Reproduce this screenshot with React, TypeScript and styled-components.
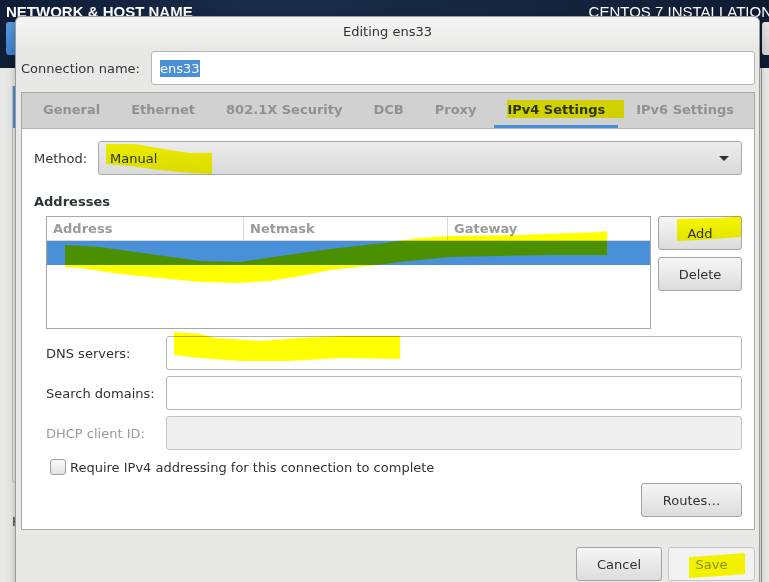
import React from 'react'
import styled, { createGlobalStyle } from 'styled-components'

const GlobalStyle = createGlobalStyle`
  html, body {
    margin: 0;
    padding: 0;
  }
  body {
    font-family: 'DejaVu Sans', 'Noto Sans', sans-serif;
    font-size: 13px;
    color: #2e3436;
    background: #e8e8e7;
  }
`

const Screen = styled.div`
  position: relative;
  width: 769px;
  height: 582px;
  overflow: hidden;
  background: #e8e8e7;
`

const TopBar = styled.div`
  height: 68px;
  background: linear-gradient(90deg, #0f1d37 0%, #1a2c4a 35%, #15253f 70%, #0f1b32 100%);
  color: #fff;
  font-family: 'Liberation Sans', Arial, sans-serif;
  font-size: 15px;
`

const TitleRow = styled.div`
  display: flex;
  height: 22px;
  padding: 4px 0 0 6px;
  box-sizing: border-box;
  line-height: 15px;
  white-space: nowrap;
`

const SpokeTitle = styled.div`
  font-weight: bold;
`

const InstallTitle = styled.div`
  margin-left: auto;
  margin-right: -3px;
`

const TopButtons = styled.div`
  display: flex;
  justify-content: space-between;
  height: 33px;
`

const DoneButton = styled.div`
  width: 60px;
  margin-left: 6px;
  background: linear-gradient(#5a9be0, #3a7fcb);
  border-radius: 3px;
`

const KeyboardButton = styled.div`
  width: 20px;
  margin-right: -13px;
  background: linear-gradient(#e4e4e4, #d2d2d2);
  border-radius: 3px;
`

const Body = styled.div`
  display: flex;
  justify-content: space-between;
  height: 514px;
`

const LeftStrip = styled.div`
  display: flex;
  flex-direction: column;
  padding-top: 18px;
  width: 40px;
`

const ListEdge = styled.div`
  margin-left: 12px;
  width: 26px;
  height: 397px;
  border-left: 1px solid #c4c4c4;
  border-bottom: 1px solid #c4c4c4;
  border-bottom-left-radius: 4px;
  box-sizing: border-box;
`

const ListSelected = styled.div`
  height: 42px;
  background: #4a90d9;
`

const HostLabel = styled.div`
  margin: 31px 0 0 12px;
  white-space: nowrap;
`

const RightStrip = styled.div`
  width: 7px;
  border-left: 1px solid #9a9a9a;
`

const Dialog = styled.div`
  position: absolute;
  left: 15px;
  top: 16px;
  width: 745px;
  height: 600px;
  box-sizing: border-box;
  border: 1px solid #9a9a9a;
  border-radius: 6px 6px 0 0;
  background: #e8e8e7;
  box-shadow: 0 2px 8px rgba(0, 0, 0, 0.25);
`

const TitleBar = styled.div`
  height: 28px;
  display: flex;
  align-items: center;
  justify-content: center;
  border-radius: 6px 6px 0 0;
  background: linear-gradient(#f4f4f4, #ebebea);
`

const DialogContent = styled.div`
  padding: 6px 4px 0 5px;
`

const ConnRow = styled.div`
  display: flex;
  align-items: center;
  height: 34px;
`

const ConnLabel = styled.div`
  width: 130px;
`

const Entry = styled.div<{ disabled?: boolean }>`
  flex: 1;
  height: 34px;
  box-sizing: border-box;
  border: 1px solid ${(p) => (p.disabled ? '#c2c2c0' : '#b6b6b3')};
  border-radius: 3px;
  background: ${(p) => (p.disabled ? '#efefef' : '#ffffff')};
  display: flex;
  align-items: center;
  padding-left: 8px;
`

const Selected = styled.span`
  background: #4a90d9;
  color: #fff;
  line-height: 17px;
`

const Notebook = styled.div`
  margin-top: 7px;
  border: 1px solid #a8a8a8;
`

const TabBar = styled.div`
  display: flex;
  gap: 5px;
  height: 35px;
  padding-left: 8px;
  background: #d1d1d1;
  border-bottom: 1px solid #b4b4b4;
`

const Tab = styled.div<{ active?: boolean }>`
  display: flex;
  align-items: center;
  padding: 0 13px 3px;
  font-weight: bold;
  color: ${(p) => (p.active ? '#2e3436' : '#919191')};
  box-shadow: ${(p) => (p.active ? 'inset 0 -3px 0 #4a90d9' : 'none')};
`

const Panel = styled.div`
  background: #fff;
  padding: 12px;
  height: 400px;
  box-sizing: border-box;
`

const MethodRow = styled.div`
  display: flex;
  align-items: center;
  height: 34px;
`

const MethodLabel = styled.div`
  width: 64px;
`

const Combo = styled.div`
  flex: 1;
  height: 34px;
  box-sizing: border-box;
  border: 1px solid #a8a8a8;
  border-radius: 3px;
  background: linear-gradient(#ececec, #dadada);
  display: flex;
  align-items: center;
  justify-content: space-between;
  padding: 0 12px 0 11px;
`

const Arrow = styled.div`
  width: 0;
  height: 0;
  border-left: 5px solid transparent;
  border-right: 5px solid transparent;
  border-top: 5px solid #2e3436;
`

const Heading = styled.div`
  font-weight: bold;
  line-height: 18px;
  margin: 18px 0 5px;
`

const AddrRow = styled.div`
  display: flex;
  gap: 7px;
  margin-left: 12px;
`

const Table = styled.div`
  width: 605px;
  height: 113px;
  box-sizing: border-box;
  border: 1px solid #a8a8a8;
`

const HeadRow = styled.div`
  display: grid;
  grid-template-columns: 196px 204px 1fr;
  height: 23px;
  border-bottom: 1px solid #d8d8d8;
`

const HeadCell = styled.div`
  display: flex;
  align-items: center;
  padding-left: 6px;
  font-weight: bold;
  color: #9a9a9a;
  border-left: 1px solid #dcdcdc;
  &:first-child {
    border-left: none;
  }
`

const SelRow = styled.div`
  height: 24px;
  background: #4a90d9;
`

const ButtonCol = styled.div`
  display: flex;
  flex-direction: column;
  gap: 7px;
`

const Button = styled.div<{ w: number; disabled?: boolean }>`
  width: ${(p) => p.w}px;
  height: 34px;
  box-sizing: border-box;
  border: 1px solid ${(p) => (p.disabled ? '#c6c6c6' : '#a3a3a3')};
  border-radius: 3px;
  background: ${(p) => (p.disabled ? '#f2f2f2' : 'linear-gradient(#f6f6f6, #dcdcdc)')};
  color: ${(p) => (p.disabled ? '#8e8e8e' : '#2e3436')};
  display: flex;
  align-items: center;
  justify-content: center;
`

const Fields = styled.div`
  display: flex;
  flex-direction: column;
  gap: 6px;
  margin: 7px 0 0 12px;
`

const FieldRow = styled.div<{ dim?: boolean }>`
  display: flex;
  align-items: center;
  color: ${(p) => (p.dim ? '#9a9a9a' : '#2e3436')};
`

const FieldLabel = styled.div`
  width: 120px;
`

const CheckRow = styled.div`
  display: flex;
  align-items: center;
  gap: 4px;
  margin: 9px 0 0 16px;
  height: 16px;
`

const CheckBox = styled.div`
  width: 16px;
  height: 16px;
  box-sizing: border-box;
  border: 1px solid #a0a0a0;
  border-radius: 3px;
  background: linear-gradient(#fafafa, #e2e2e2);
`

const RoutesRow = styled.div`
  display: flex;
  justify-content: flex-end;
  margin-top: 8px;
`

const Footer = styled.div`
  display: flex;
  justify-content: flex-end;
  gap: 6px;
  margin-top: 17px;
`

const Marks = styled.svg`
  position: absolute;
  left: 0;
  top: 0;
  mix-blend-mode: multiply;
  pointer-events: none;
`

const tabs = ['General', 'Ethernet', '802.1X Security', 'DCB', 'Proxy', 'IPv4 Settings', 'IPv6 Settings']

const highlights = [
  '106,144 135,144 170,150 190,153 212,153 212,174 190,173 160,170 130,166 106,164',
  '507,100 624,100 624,118 507,118',
  '65,245 100,247 150,254 200,261 240,262 280,256 330,249 384,243 420,238 450,236 520,235 600,232 607,231 607,255 550,255 450,257 400,262 384,264 330,270 300,276 270,281 240,283 200,282 160,278 120,274 80,268 65,267',
  '174,332 200,334 215,338 260,341 300,338 340,336 400,336 400,359 340,358 290,361 240,361 200,358 174,355',
  '677,219 720,218 741,216 741,237 700,240 677,241',
  '689,557 720,555 745,553 745,574 720,576 689,578',
]

export default function App() {
  return (
    <Screen>
      <GlobalStyle />
      <TopBar>
        <TitleRow>
          <SpokeTitle>NETWORK &amp; HOST NAME</SpokeTitle>
          <InstallTitle>CENTOS 7 INSTALLATION</InstallTitle>
        </TitleRow>
        <TopButtons>
          <DoneButton />
          <KeyboardButton />
        </TopButtons>
      </TopBar>
      <Body>
        <LeftStrip>
          <ListEdge>
            <ListSelected />
          </ListEdge>
          <HostLabel>Host name:</HostLabel>
        </LeftStrip>
        <RightStrip />
      </Body>

      <Dialog>
        <TitleBar>Editing ens33</TitleBar>
        <DialogContent>
          <ConnRow>
            <ConnLabel>Connection name:</ConnLabel>
            <Entry>
              <Selected>ens33</Selected>
            </Entry>
          </ConnRow>
          <Notebook>
            <TabBar>
              {tabs.map((t) => (
                <Tab key={t} active={t === 'IPv4 Settings'}>
                  {t}
                </Tab>
              ))}
            </TabBar>
            <Panel>
              <MethodRow>
                <MethodLabel>Method:</MethodLabel>
                <Combo>
                  <span>Manual</span>
                  <Arrow />
                </Combo>
              </MethodRow>
              <Heading>Addresses</Heading>
              <AddrRow>
                <Table>
                  <HeadRow>
                    <HeadCell>Address</HeadCell>
                    <HeadCell>Netmask</HeadCell>
                    <HeadCell>Gateway</HeadCell>
                  </HeadRow>
                  <SelRow />
                </Table>
                <ButtonCol>
                  <Button w={84}>Add</Button>
                  <Button w={84}>Delete</Button>
                </ButtonCol>
              </AddrRow>
              <Fields>
                <FieldRow>
                  <FieldLabel>DNS servers:</FieldLabel>
                  <Entry />
                </FieldRow>
                <FieldRow>
                  <FieldLabel>Search domains:</FieldLabel>
                  <Entry />
                </FieldRow>
                <FieldRow dim>
                  <FieldLabel>DHCP client ID:</FieldLabel>
                  <Entry disabled />
                </FieldRow>
              </Fields>
              <CheckRow>
                <CheckBox />
                <span>Require IPv4 addressing for this connection to complete</span>
              </CheckRow>
              <RoutesRow>
                <Button w={101}>Routes…</Button>
              </RoutesRow>
            </Panel>
          </Notebook>
          <Footer>
            <Button w={86}>Cancel</Button>
            <Button w={87} disabled>
              Save
            </Button>
          </Footer>
        </DialogContent>
      </Dialog>

      <Marks width={769} height={582} viewBox="0 0 769 582">
        {highlights.map((pts, i) => (
          <polygon key={i} points={pts} fill="#ffff00" />
        ))}
      </Marks>
    </Screen>
  )
}
